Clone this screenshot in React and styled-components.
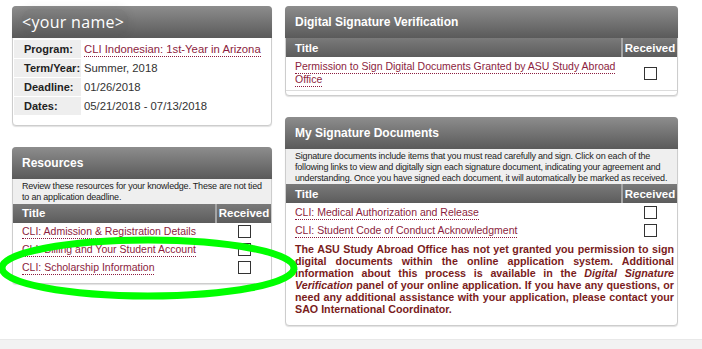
import styled, { createGlobalStyle } from "styled-components"

const Global = createGlobalStyle`
    html, body {
        margin: 0;
        padding: 0;
        background: #fff;
        font-family: "Liberation Sans", Arial, sans-serif;
        color: #333;
    }
    * { box-sizing: border-box; }
`

const profile = [
    { label: "Program:", value: "CLI Indonesian: 1st-Year in Arizona", link: true },
    { label: "Term/Year:", value: "Summer, 2018" },
    { label: "Deadline:", value: "01/26/2018" },
    { label: "Dates:", value: "05/21/2018 - 07/13/2018" },
]

const resources = [
    "CLI: Admission & Registration Details",
    "CLI: Billing and Your Student Account",
    "CLI: Scholarship Information",
]

const signatures = [
    "CLI: Medical Authorization and Release",
    "CLI: Student Code of Conduct Acknowledgment",
]

const DocTable = ({ rows, twoLine }) => (
    <Table>
        <HeadRow>
            <HeadCell>Title</HeadCell>
            <HeadCell $center>Received</HeadCell>
        </HeadRow>
        {rows.map((r) => (
            <Row key={r} $tall={twoLine}>
                <TitleCell><Link>{r}</Link></TitleCell>
                <BoxCell><Box /></BoxCell>
            </Row>
        ))}
    </Table>
)

const App = () => {
    return (
        <Page>
            <Global />
            <Columns>
                <Column $w={260} $gap={21}>
                    <Panel $pb={10}>
                        <Header><NameText>&lt;your name&gt;</NameText></Header>
                        <Info>
                            {profile.map((p) => (
                                <InfoRow key={p.label}>
                                    <Label>{p.label}</Label>
                                    <Value>{p.link ? <Link>{p.value}</Link> : p.value}</Value>
                                </InfoRow>
                            ))}
                        </Info>
                    </Panel>

                    <Panel $pb={6}>
                        <Header>Resources</Header>
                        <Note>Review these resources for your knowledge. These are not tied to an application deadline.</Note>
                        <DocTable rows={resources} />
                    </Panel>
                </Column>

                <Column $w={393} $gap={21}>
                    <Panel $pb={4}>
                        <Header>Digital Signature Verification</Header>
                        <DocTable rows={["Permission to Sign Digital Documents Granted by ASU Study Abroad Office"]} twoLine />
                    </Panel>

                    <Panel $pb={6}>
                        <Header>My Signature Documents</Header>
                        <Note>Signature documents include items that you must read carefully and sign. Click on each of the following links to view and digitally sign each signature document, indicating your agreement and understanding. Once you have signed each document, it will automatically be marked as received.</Note>
                        <DocTable rows={signatures} />
                        <Warning>
                            The ASU Study Abroad Office has not yet granted you permission to sign digital documents within the online application system. Additional information about this process is available in the <em>Digital Signature Verification</em> panel of your online application. If you have any questions, or need any additional assistance with your application, please contact your SAO International Coordinator.
                        </Warning>
                    </Panel>
                </Column>
            </Columns>
            <Footer />
            <Circle viewBox="0 0 306 66" width="306" height="66">
                <ellipse cx="150" cy="33" rx="146" ry="28" fill="none" stroke="#00ff00" strokeWidth="7" />
            </Circle>
        </Page>
    )
}

export default App

const Page = styled.div`
    position: relative;
    width: 702px;
    height: 349px;
    overflow: hidden;
`

const Columns = styled.div`
    display: flex;
    gap: 13px;
    padding: 6px 0 0 12px;
    height: 339px;
    align-items: flex-start;
`

const Column = styled.div`
    width: ${(p) => p.$w}px;
    display: flex;
    flex-direction: column;
    gap: ${(p) => p.$gap}px;
`

const Panel = styled.div`
    border: 1px solid #cdcdcd;
    border-radius: 4px;
    background: #fff;
    box-shadow: 0 1px 1px rgba(0, 0, 0, 0.12);
    padding-bottom: ${(p) => p.$pb}px;
`

const Header = styled.div`
    height: 32px;
    margin: -1px -1px 0;
    border-radius: 4px 4px 0 0;
    background: linear-gradient(#8d8d8d, #5a5a5a);
    color: #fff;
    font-weight: bold;
    font-size: 12px;
    display: flex;
    align-items: center;
    padding-left: 10px;
`

const NameText = styled.span`
    font-family: "Open Sans", sans-serif;
    font-weight: normal;
    font-size: 16px;
    letter-spacing: 0.3px;
    padding: 2px 4px 2px 0;
    border-radius: 10px;
    background: rgba(70, 70, 70, 0.12);
    box-shadow: 0 0 8px rgba(70, 70, 70, 0.15);
`

const Info = styled.div`
    display: flex;
    flex-direction: column;
    gap: 1px;
    padding: 2px 1px 0;
`

const InfoRow = styled.div`
    display: grid;
    grid-template-columns: 67px 1fr;
    column-gap: 3px;
    height: 18px;
    align-items: center;
`

const Label = styled.div`
    height: 100%;
    background: #eeeeee;
    padding-left: 10px;
    display: flex;
    align-items: center;
    font-size: 11px;
    font-weight: bold;
    color: #222;
`

const Value = styled.div`
    font-size: 11.3px;
    color: #333;
`

const Link = styled.span`
    color: #8c1d40;
    border-bottom: 1px dotted #8c1d40;
    padding-bottom: 1px;
`

const Note = styled.div`
    background: #efefef;
    color: #222;
    font-size: 9px;
    letter-spacing: -0.2px;
    line-height: 10.8px;
    padding: 2px 5px 1px 9px;
`

const Table = styled.div`
    display: flex;
    flex-direction: column;
`

const HeadRow = styled.div`
    display: grid;
    grid-template-columns: 1fr 54px;
    column-gap: 2px;
    height: 19px;
    background: #a5a5a5;
`

const HeadCell = styled.div`
    background: linear-gradient(#7a7a7a, #5c5c5c);
    color: #fff;
    font-weight: bold;
    font-size: 11.5px;
    display: flex;
    align-items: center;
    justify-content: ${(p) => (p.$center ? "center" : "flex-start")};
    padding-left: ${(p) => (p.$center ? 0 : 9)}px;
`

const Row = styled.div`
    display: grid;
    grid-template-columns: 1fr 54px;
    column-gap: 2px;
    min-height: 18px;
    padding: ${(p) => (p.$tall ? "3px 0 4px" : "0")};
    border-bottom: ${(p) => (p.$tall ? "1px solid #dcdcdc" : "none")};
    align-items: center;
`

const TitleCell = styled.div`
    font-size: 10.5px;
    line-height: 13px;
    padding-left: 9px;
`

const BoxCell = styled.div`
    display: flex;
    justify-content: center;
`

const Box = styled.span`
    width: 13px;
    height: 13px;
    border: 1px solid #333;
    background: #fff;
`

const Warning = styled.div`
    color: #7a1c1c;
    font-weight: bold;
    font-size: 10.7px;
    line-height: 12px;
    text-align: justify;
    padding: 4px 3px 4px 9px;
`

const Footer = styled.div`
    height: 10px;
    background: #f2f2f2;
    border-top: 1px solid #e8e8e8;
`

const Circle = styled.svg`
    position: absolute;
    left: -2px;
    top: 235px;
`
